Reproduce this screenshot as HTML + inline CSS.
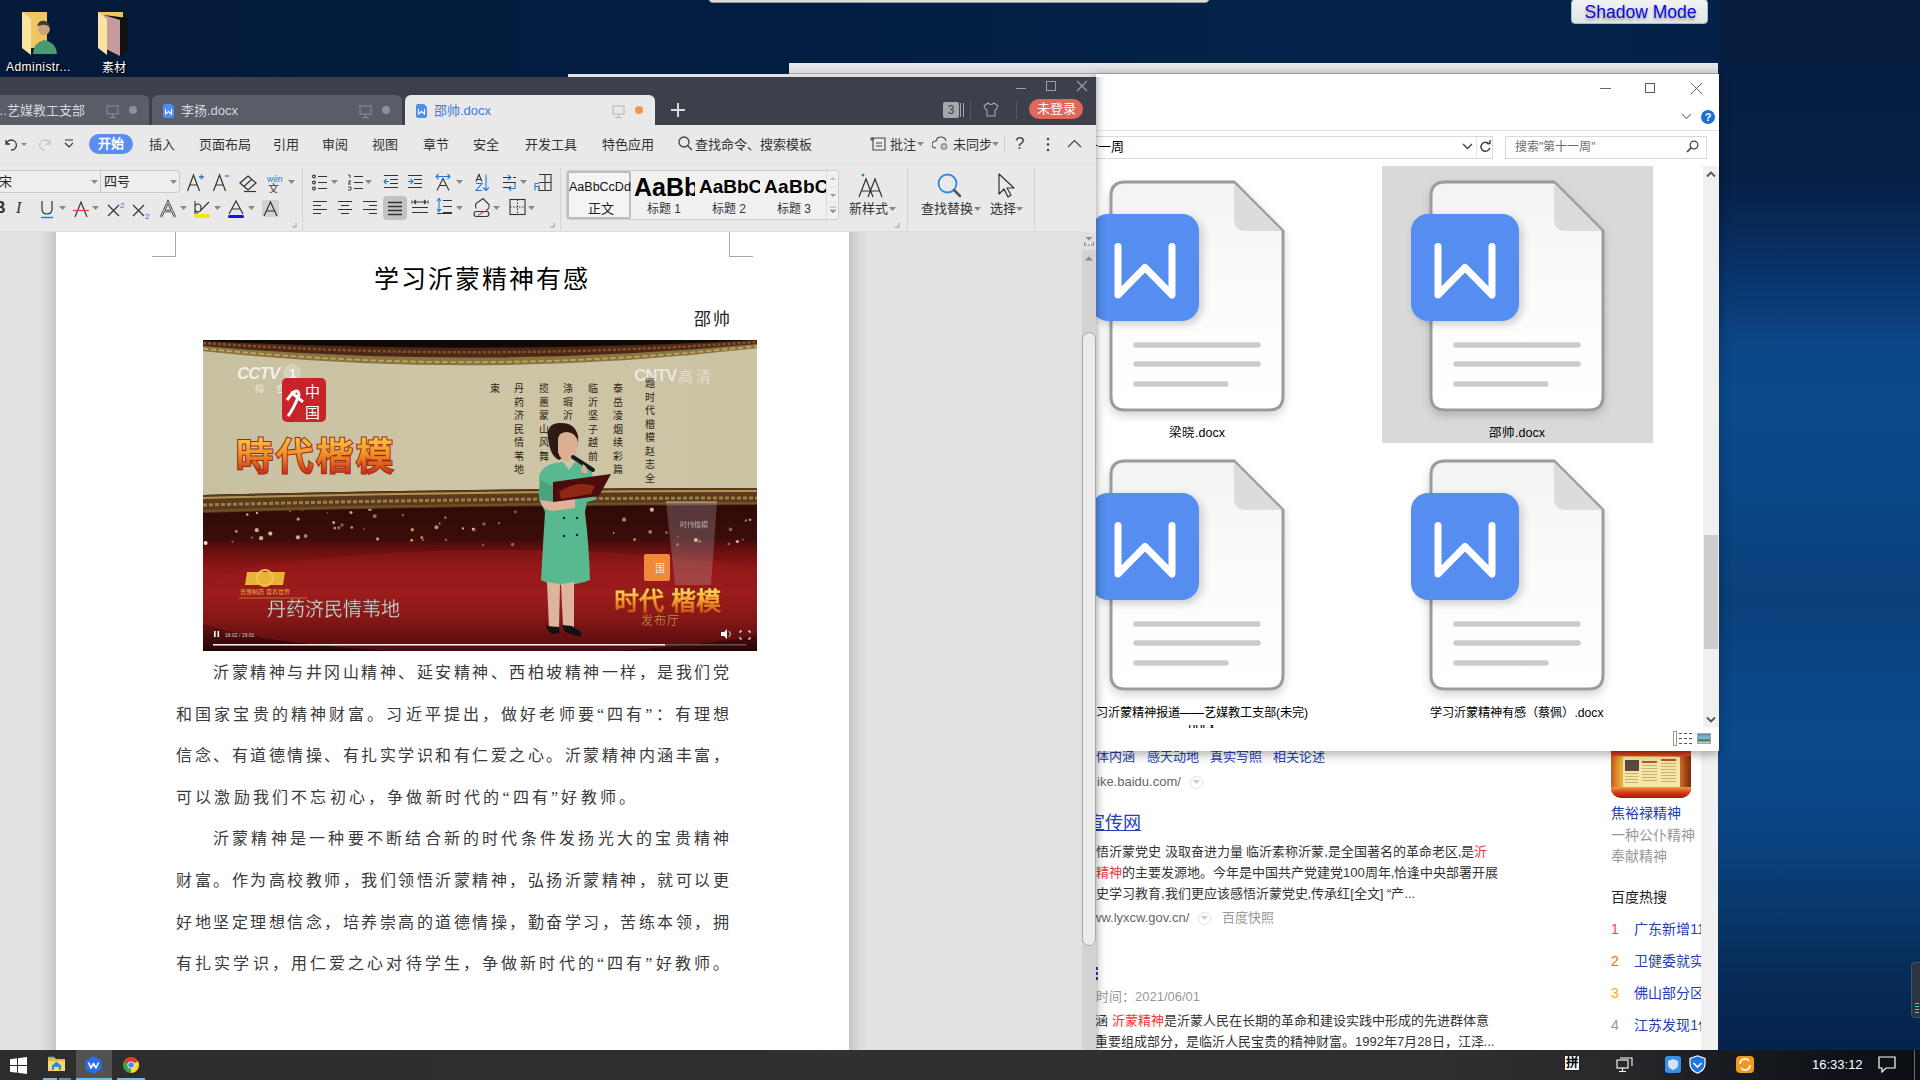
<!DOCTYPE html>
<html lang="zh-CN"><head><meta charset="utf-8">
<style>
*{margin:0;padding:0;box-sizing:border-box}
html,body{width:1920px;height:1080px;overflow:hidden}
body{position:relative;font-family:"Liberation Sans",sans-serif;background:#03173a}
.a{position:absolute}
.nw{white-space:nowrap}
#desk{left:0;top:0;width:1920px;height:1080px;background:
 linear-gradient(180deg,#061c3e 0px,#072046 180px,#09326a 270px,#0b4584 340px,#0b4a8c 400px,#0a4482 520px,#0a3f7b 600px,#0b4a8c 740px,#0a4280 840px,#083668 920px,#062a56 980px,#05234c 1050px)}
#deskTop{left:0;top:0;width:1720px;height:80px;background:linear-gradient(90deg,#041a3a 0%,#031c40 40%,#042045 60%,#05234b 80%,#05214a 100%)}
.dlabel{color:#fff;font-size:12px;text-shadow:0 0 2px #000,1px 1px 2px #000}
/* explorer */
#exp{left:1096px;top:74px;width:623px;height:677px;background:#fff;box-shadow:0 3px 10px rgba(0,0,0,.35);overflow:hidden}
#brw{left:1096px;top:74px;width:622px;height:976px;background:#fff;overflow:hidden}
#task{left:0;top:1050px;width:1920px;height:30px;background:linear-gradient(90deg,#2d2d2d 0%,#303030 45%,#2f2f2f 75%,#28292b 84%,#181b20 90%,#0e1218 96%,#0d1117 100%)}
.lbl{font-size:12.5px;color:#000;text-align:center}
</style></head><body>
<div id="desk" class="a"></div>
<div id="deskTop" class="a"></div>

<!-- desktop icons -->
<div class="a" style="left:22px;top:12px;width:26px;height:40px">
 <svg width="40" height="44" viewBox="0 0 40 44" style="position:absolute;left:0;top:0">
  <path d="M0 0H25V36H0Z" fill="#f0c75e"/>
  <path d="M0 0L9 7V43L0 36Z" fill="#fbe4a0"/>
  <circle cx="22" cy="17" r="6" fill="#c9a27e"/>
  <path d="M15 14Q17 8 23 9Q29 10 28 17Q26 12 20 13Z" fill="#3b3b3b"/>
  <path d="M11 42Q12 30 22 28Q34 30 35 42Z" fill="#4b9a72"/>
 </svg>
</div>
<div class="a dlabel nw" style="left:6px;top:60px;letter-spacing:0.45px">Administr...</div>
<div class="a" style="left:98px;top:12px;width:32px;height:42px">
 <svg width="32" height="44" viewBox="0 0 32 44">
  <path d="M0 0H25V36H0Z" fill="#f0c75e"/>
  <path d="M6 3L30 6V38L22 44L6 36Z" fill="#111"/>
  <path d="M6 3L22 8V44L6 36Z" fill="#c79a9c"/>
  <path d="M0 0L9 7V43L0 36Z" fill="#fbe4a0"/>
 </svg>
</div>
<div class="a dlabel nw" style="left:102px;top:58px">素材</div>

<!-- top thin bar -->
<div class="a" style="left:708px;top:-4px;width:502px;height:7px;background:#dcdcdc;border-radius:0 0 5px 5px;border:1px solid #9a9a9a"></div>
<!-- shadow mode -->
<div class="a nw" style="left:1571px;top:-1px;width:137px;height:25px;background:linear-gradient(#f2f2f2,#e4e4e4);border:1px solid #8fc8c0;border-radius:4px;color:#0a0ae0;font-size:17.5px;text-align:center;line-height:24px;padding-left:2px;text-shadow:0 2px 3px rgba(0,0,0,0.35)">Shadow Mode</div>

<!-- background window strips -->
<div class="a" style="left:568px;top:74px;width:600px;height:4px;background:#e2e0e0"></div>
<div class="a" style="left:789px;top:63px;width:929px;height:11px;background:linear-gradient(#e9ebed,#d5d8db);border-bottom:1px solid #a8a8a8"></div>

<!-- BROWSER -->
<div id="brw" class="a"></div>
<div class="a" style="left:1701px;top:74px;width:17px;height:976px;background:#f1f1f1"></div>
<div class="a nw" style="left:1096px;top:748px;font-size:13px;color:#2440b3;line-height:17px">体内涵<span style="margin-left:12px">感天动地</span><span style="margin-left:11px">真实写照</span><span style="margin-left:11px">相关论述</span></div>
<div class="a nw" style="left:1097px;top:774px;font-size:13px;color:#666;line-height:16px">ike.baidu.com/</div>
<div class="a" style="left:1190px;top:776px;width:13px;height:13px;border-radius:50%;border:1.5px solid #e3e3e3"></div><svg class="a" style="left:1193px;top:780px" width="7" height="5"><path d="M0 0H7L3.5 4Z" fill="#ccc"/></svg>
<div class="a nw" style="left:1087px;top:812px;font-size:18px;color:#2440b3;line-height:22px;text-decoration:underline">宣传网</div>
<div class="a nw" style="left:1096px;top:841px;font-size:13px;color:#333;line-height:21px">悟沂蒙党史 汲取奋进力量 临沂素称沂蒙,是全国著名的革命老区,是<span style="color:#e33">沂</span><br><span style="color:#e33">精神</span>的主要发源地。今年是中国共产党建党100周年,恰逢中央部署开展<br>史学习教育,我们更应该感悟沂蒙党史,传承红[全文] “产...</div>
<div class="a nw" style="left:1092px;top:910px;font-size:13px;color:#666;line-height:16px">ww.lyxcw.gov.cn/</div>
<div class="a" style="left:1198px;top:912px;width:13px;height:13px;border-radius:50%;border:1.5px solid #e3e3e3"></div><svg class="a" style="left:1201px;top:916px" width="7" height="5"><path d="M0 0H7L3.5 4Z" fill="#ccc"/></svg>
<div class="a nw" style="left:1222px;top:910px;font-size:13px;color:#999;line-height:16px">百度快照</div>
<div class="a" style="left:1095px;top:967px;width:3px;height:13px;border-left:3px dotted #2440b3"></div>
<div class="a nw" style="left:1096px;top:989px;font-size:13px;color:#999;line-height:16px">时间：2021/06/01</div>
<div class="a nw" style="left:1095px;top:1010px;font-size:13px;color:#333;line-height:21px">涵 <span style="color:#e33">沂蒙精神</span>是沂蒙人民在长期的革命和建设实践中形成的先进群体意<br>重要组成部分，是临沂人民宝贵的精神财富。1992年7月28日，江泽...</div>
<div class="a" style="left:1611px;top:740px;width:80px;height:58px;border-radius:0 0 10px 10px;overflow:hidden;background:linear-gradient(90deg,#c85a18 0%,#e8a838 12%,#f0c050 20%,#e0a040 80%,#b04a18 92%,#7a2a10 100%)">
 <div class="a" style="left:0;top:0;width:80px;height:16px;background:linear-gradient(#6a0c08,#c82a18 70%,#e05020)"></div>
 <div class="a" style="left:12px;top:17px;width:57px;height:32px;background:#f3e6a8"></div>
 <div class="a" style="left:14px;top:20px;width:14px;height:11px;background:#5a4a42"></div>
 <div class="a" style="left:14px;top:33px;width:13px;height:10px;background:repeating-linear-gradient(#c8b070 0 1px,transparent 1px 3px)"></div>
 <div class="a" style="left:31px;top:21px;width:15px;height:2px;background:#d04a30"></div>
 <div class="a" style="left:31px;top:25px;width:15px;height:18px;background:repeating-linear-gradient(#c8b070 0 1px,transparent 1px 3px)"></div>
 <div class="a" style="left:50px;top:19px;width:15px;height:2px;background:#d04a30"></div>
 <div class="a" style="left:50px;top:23px;width:15px;height:20px;background:repeating-linear-gradient(#c8b070 0 1px,transparent 1px 3px)"></div>
 <div class="a" style="left:0;top:47px;width:80px;height:11px;background:linear-gradient(#e8a040,#d83a1a 50%,#a01a10)"></div>
</div>
<div class="a nw" style="left:1611px;top:804px;font-size:14px;color:#2440b3;line-height:18px">焦裕禄精神</div>
<div class="a nw" style="left:1611px;top:825px;font-size:14px;color:#999;line-height:21px">一种公仆精神<br>奉献精神</div>
<div class="a nw" style="left:1611px;top:888px;font-size:14px;color:#222;line-height:18px">百度热搜</div>
<div class="a nw" style="left:1611px;top:913px;font-size:14px;line-height:32px;color:#2440b3;width:90px;overflow:hidden">
<span style="color:#f54545">1</span>&nbsp;&nbsp;&nbsp;&nbsp;广东新增11<br><span style="color:#ff6600">2</span>&nbsp;&nbsp;&nbsp;&nbsp;卫健委就实<br><span style="color:#faa90e">3</span>&nbsp;&nbsp;&nbsp;&nbsp;佛山部分区<br><span style="color:#9195a3">4</span>&nbsp;&nbsp;&nbsp;&nbsp;江苏发现1亿</div>
<div class="a" style="left:1911px;top:962px;width:12px;height:56px;background:#2b3440;border:1px solid #4a5560;border-radius:4px">
 <div class="a" style="left:3px;top:40px;width:4px;height:10px;background:repeating-linear-gradient(#3ad29f 0 1px,transparent 1px 3px)"></div>
</div>


<!-- EXPLORER -->
<div id="exp" class="a"></div>
<svg width="0" height="0" style="position:absolute">
 <defs>
  <linearGradient id="dg" x1="0" y1="0" x2="0" y2="1"><stop offset="0" stop-color="#f3f3f3"/><stop offset="0.45" stop-color="#fbfbfb"/><stop offset="1" stop-color="#ffffff"/></linearGradient>
  <filter id="dsh" x="-20%" y="-20%" width="140%" height="140%"><feGaussianBlur in="SourceAlpha" stdDeviation="5"/><feOffset dy="4"/><feComponentTransfer><feFuncA type="linear" slope="0.18"/></feComponentTransfer><feMerge><feMergeNode/><feMergeNode in="SourceGraphic"/></feMerge></filter>
  <filter id="wsh" x="-30%" y="-30%" width="160%" height="160%"><feGaussianBlur in="SourceAlpha" stdDeviation="4"/><feOffset dx="3" dy="3"/><feComponentTransfer><feFuncA type="linear" slope="0.2"/></feComponentTransfer><feMerge><feMergeNode/><feMergeNode in="SourceGraphic"/></feMerge></filter>
  <g id="docic">
   <path filter="url(#dsh)" d="M15 1H124L173 50V215Q173 229 159 229H15Q1 229 1 215V15Q1 1 15 1Z" fill="url(#dg)" stroke="#9b9b9b" stroke-width="3"/>
   <path d="M124 2V38Q124 50 136 50H172Z" fill="#dcdcdc"/>
   <path d="M26 164H148M26 183H148M26 203H116" stroke="#cbcbcb" stroke-width="5.5" stroke-linecap="round"/>
   <rect filter="url(#wsh)" x="-19" y="33" width="108" height="107" rx="17" fill="#558ef0"/>
   <path d="M8 65.5V114L35 86.5L62 114V65.5" fill="none" stroke="#fff" stroke-width="7" stroke-linecap="round" stroke-linejoin="round"/>
  </g>
 </defs>
</svg>
<div class="a" style="left:1382px;top:166px;width:271px;height:277px;background:#d9d9d9"></div>
<svg class="a" style="left:1085px;top:173px;overflow:visible" width="220" height="250" viewBox="-25 -8 220 250"><use href="#docic"/></svg><svg class="a" style="left:1405px;top:173px;overflow:visible" width="220" height="250" viewBox="-25 -8 220 250"><use href="#docic"/></svg><svg class="a" style="left:1085px;top:452px;overflow:visible" width="220" height="250" viewBox="-25 -8 220 250"><use href="#docic"/></svg><svg class="a" style="left:1405px;top:452px;overflow:visible" width="220" height="250" viewBox="-25 -8 220 250"><use href="#docic"/></svg>
<div class="a nw lbl" style="left:1097px;top:422px;width:200px">梁晓.docx</div>
<div class="a nw lbl" style="left:1417px;top:422px;width:200px">邵帅.docx</div>
<div class="a nw lbl" style="right:612px;top:703px;font-size:12.2px">学习沂蒙精神报道——艺媒教工支部(未完)</div>
<div class="a nw lbl" style="left:1170px;top:725px;width:60px;height:3px;overflow:hidden"><div style="margin-top:-7px;line-height:16px">.docx</div></div>
<div class="a nw lbl" style="left:1367px;top:703px;width:300px;font-size:12.2px">学习沂蒙精神有感（蔡佩）.docx</div>
<!-- title buttons -->
<div class="a" style="left:1600px;top:88px;width:11px;height:1px;background:#666"></div>
<div class="a" style="left:1645px;top:83px;width:10px;height:10px;border:1px solid #555"></div>
<svg class="a" style="left:1690px;top:82px" width="13" height="13"><path d="M1 1L12 12M12 1L1 12" stroke="#555" stroke-width="0.9"/></svg>
<svg class="a" style="left:1681px;top:113px" width="11" height="7"><path d="M1 1L5.5 5.5L10 1" fill="none" stroke="#888" stroke-width="1.2"/></svg>
<div class="a" style="left:1701px;top:110px;width:14px;height:14px;border-radius:50%;background:#1b6fcf;color:#fff;font-size:11px;font-weight:bold;text-align:center;line-height:14px">?</div>
<div class="a" style="left:1096px;top:130px;width:623px;height:1px;background:#e3e3e3"></div>
<!-- address bar -->
<div class="a" style="left:1080px;top:136px;width:413px;height:23px;border:1px solid #d9d9d9;border-left:none"></div>
<div class="a nw" style="left:1072px;top:138px;font-size:13px;color:#000;line-height:17px">第十一周</div>
<svg class="a" style="left:1462px;top:143px" width="11" height="7"><path d="M1 1L5.5 5.5L10 1" fill="none" stroke="#444" stroke-width="1.4"/></svg>
<div class="a" style="left:1476px;top:137px;width:1px;height:21px;background:#e3e3e3"></div>
<svg class="a" style="left:1479px;top:140px" width="13" height="13"><path d="M10 4A4.5 4.5 0 1 0 10.8 8" fill="none" stroke="#444" stroke-width="1.5"/><path d="M7.5 3.5H11V0" fill="none" stroke="#444" stroke-width="1.5"/></svg>
<div class="a" style="left:1505px;top:136px;width:202px;height:23px;border:1px solid #d9d9d9"></div>
<div class="a nw" style="left:1515px;top:139px;font-size:12px;color:#6d6d6d;line-height:16px">搜索"第十一周"</div>
<svg class="a" style="left:1686px;top:140px" width="13" height="13"><circle cx="8" cy="5" r="3.8" fill="none" stroke="#444" stroke-width="1.3"/><path d="M5.3 7.7L1 12" stroke="#444" stroke-width="1.7"/></svg>
<!-- scrollbar -->
<div class="a" style="left:1703px;top:166px;width:16px;height:561px;background:#f0f0f0"></div>
<svg class="a" style="left:1706px;top:171px" width="10" height="7"><path d="M1 5.5L5 1.5L9 5.5" fill="none" stroke="#555" stroke-width="1.8"/></svg>
<svg class="a" style="left:1706px;top:716px" width="10" height="7"><path d="M1 1.5L5 5.5L9 1.5" fill="none" stroke="#555" stroke-width="1.8"/></svg>
<div class="a" style="left:1704px;top:535px;width:14px;height:114px;background:#cdcdcd"></div>
<!-- status icons -->
<svg class="a" style="left:1673px;top:731px" width="20" height="15"><rect x="0.5" y="0.5" width="3" height="14" fill="#fff" stroke="#999"/><path d="M6 2.5H9M11 2.5H14M16 2.5H19M6 7.5H9M11 7.5H14M16 7.5H19M6 12.5H9M11 12.5H14M16 12.5H19" stroke="#555" stroke-width="1"/></svg>
<div class="a" style="left:1697px;top:733px;width:14px;height:11px;border:1px solid #9ea4aa;background:linear-gradient(#5a8fc0 0%,#8ab6d8 45%,#3b7a4a 70%,#d8e4ee 100%)"></div>


<!-- WPS -->
<div id="wps" class="a" style="left:0;top:77px;width:1096px;height:973px;background:#e3e3e3;overflow:hidden"></div>
<!-- title bar -->
<div class="a" style="left:0;top:77px;width:1096px;height:48px;background:#3d404b"></div>
<div class="a" style="left:1016px;top:88px;width:10px;height:1px;background:#9a9da4"></div>
<div class="a" style="left:1046px;top:81px;width:10px;height:10px;border:1px solid #9a9da4"></div>
<svg class="a" style="left:1076px;top:80px" width="12" height="12"><path d="M1 1L11 11M11 1L1 11" stroke="#9a9da4" stroke-width="1.2"/></svg>
<!-- tabs -->
<div class="a" style="left:-10px;top:95px;width:159px;height:30px;background:#5b5e69;border-radius:0 6px 0 0"></div>
<div class="a nw" style="left:-4px;top:102px;font-size:13px;color:#d5d6da;line-height:18px">...艺媒教工支部</div>
<div class="a" style="left:152px;top:95px;width:250px;height:30px;background:#5b5e69;border-radius:6px 6px 0 0"></div>
<div class="a" style="left:405px;top:95px;width:250px;height:30px;background:#e9e9e9;border-radius:6px 6px 0 0"></div>
<svg class="a" style="left:163px;top:104px" width="11" height="14"><path d="M0 2Q0 0 2 0H8L11 3V12Q11 14 9 14H2Q0 14 0 12Z" fill="#4d8ef0"/><path d="M2.5 5V10L5.5 7.5L8.5 10V5" fill="none" stroke="#fff" stroke-width="1.1"/></svg>
<svg class="a" style="left:416px;top:104px" width="11" height="14"><path d="M0 2Q0 0 2 0H8L11 3V12Q11 14 9 14H2Q0 14 0 12Z" fill="#4d8ef0"/><path d="M2.5 5V10L5.5 7.5L8.5 10V5" fill="none" stroke="#fff" stroke-width="1.1"/></svg>
<div class="a nw" style="left:181px;top:102px;font-size:13px;color:#d5d6da;line-height:18px">李扬.docx</div>
<div class="a nw" style="left:434px;top:102px;font-size:13px;color:#3d7ae0;line-height:18px">邵帅.docx</div>
<svg class="a" style="left:106px;top:105px" width="13" height="13"><rect x="1" y="1" width="11" height="8" fill="none" stroke="#8d9099" stroke-width="1"/><path d="M6.5 9V12M3.5 12.5H9.5" stroke="#8d9099" stroke-width="1"/></svg><div class="a" style="left:129px;top:106px;width:8px;height:8px;border-radius:50%;background:#8d9099"></div><svg class="a" style="left:359px;top:105px" width="13" height="13"><rect x="1" y="1" width="11" height="8" fill="none" stroke="#8d9099" stroke-width="1"/><path d="M6.5 9V12M3.5 12.5H9.5" stroke="#8d9099" stroke-width="1"/></svg><div class="a" style="left:382px;top:106px;width:8px;height:8px;border-radius:50%;background:#8d9099"></div><svg class="a" style="left:612px;top:105px" width="13" height="13"><rect x="1" y="1" width="11" height="8" fill="none" stroke="#b4b4b4" stroke-width="1"/><path d="M6.5 9V12M3.5 12.5H9.5" stroke="#b4b4b4" stroke-width="1"/></svg><div class="a" style="left:635px;top:106px;width:8px;height:8px;border-radius:50%;background:#ee9a4d"></div>
<svg class="a" style="left:671px;top:103px" width="14" height="14"><path d="M7 0V14M0 7H14" stroke="#d8d9dc" stroke-width="2"/></svg>
<div class="a" style="left:943px;top:102px;width:16px;height:16px;background:#a6a7ab;border-radius:2px;color:#3d404b;font-size:12px;text-align:center;line-height:16px">3</div>
<div class="a" style="left:960px;top:103px;width:4px;height:14px;border-left:1px solid #a6a7ab;border-right:1px solid #a6a7ab"></div>
<div class="a" style="left:970px;top:101px;width:1px;height:18px;background:#565964"></div>
<svg class="a" style="left:983px;top:102px" width="16" height="15"><path d="M5 1L1 4L3 8H4V14H12V8H13L15 4L11 1Q8 4 5 1Z" fill="none" stroke="#a6a7ab" stroke-width="1.1"/></svg>
<div class="a" style="left:1016px;top:101px;width:1px;height:18px;background:#565964"></div>
<div class="a nw" style="left:1029px;top:99px;width:54px;height:20px;border-radius:10px;background:#e0685b;color:#fff;font-size:13px;text-align:center;line-height:20px">未登录</div>
<!-- toolbar -->
<div class="a" style="left:0;top:125px;width:1096px;height:107px;background:#e9e9e9"></div>
<div class="a" style="left:0;top:163px;width:1096px;height:1px;background:#dcdcdc"></div>
<div class="a" style="left:0;top:231px;width:1082px;height:1px;background:#dadada"></div>
<!-- undo etc -->
<svg class="a" style="left:3px;top:137px" width="70" height="14">
 <path d="M3 3V7H7" fill="none" stroke="#333" stroke-width="1.3"/><path d="M3.5 7A5 5 0 1 1 8 13" fill="none" stroke="#333" stroke-width="1.3"/>
 <path d="M18 6L21 9L24 6Z" fill="#888"/>
 <path d="M47 3V7H43" fill="none" stroke="#c4c4c4" stroke-width="1.3"/><path d="M46.5 7A5 5 0 1 0 42 13" fill="none" stroke="#c4c4c4" stroke-width="1.3"/>
 <path d="M62 3H70M62 6L66 10L70 6" fill="none" stroke="#333" stroke-width="1.2"/>
</svg>
<div class="a nw" style="left:89px;top:134px;width:44px;height:20px;border-radius:10px;background:#5b8def;color:#fff;font-size:13px;text-align:center;line-height:20px;font-weight:bold">开始</div>
<div class="a nw" style="top:136px;left:149px;font-size:13px;color:#333;line-height:18px">插入</div>
<div class="a nw" style="top:136px;left:199px;font-size:13px;color:#333;line-height:18px">页面布局</div>
<div class="a nw" style="top:136px;left:273px;font-size:13px;color:#333;line-height:18px">引用</div>
<div class="a nw" style="top:136px;left:322px;font-size:13px;color:#333;line-height:18px">审阅</div>
<div class="a nw" style="top:136px;left:372px;font-size:13px;color:#333;line-height:18px">视图</div>
<div class="a nw" style="top:136px;left:423px;font-size:13px;color:#333;line-height:18px">章节</div>
<div class="a nw" style="top:136px;left:473px;font-size:13px;color:#333;line-height:18px">安全</div>
<div class="a nw" style="top:136px;left:525px;font-size:13px;color:#333;line-height:18px">开发工具</div>
<div class="a nw" style="top:136px;left:602px;font-size:13px;color:#333;line-height:18px">特色应用</div>
<svg class="a" style="left:678px;top:136px" width="15" height="15"><circle cx="6" cy="6" r="5" fill="none" stroke="#444" stroke-width="1.3"/><path d="M9.5 9.5L14 14" stroke="#444" stroke-width="1.5"/></svg>
<div class="a nw" style="top:136px;left:695px;font-size:13px;color:#333;line-height:18px">查找命令、搜索模板</div>
<svg class="a" style="left:870px;top:136px" width="16" height="15"><path d="M3 2H15V14H3Z" fill="none" stroke="#444" stroke-width="1.1"/><path d="M0 3H4M2 1V5M6 7H12M6 10H12" stroke="#444" stroke-width="1.1"/></svg>
<div class="a nw" style="top:136px;left:890px;font-size:13px;color:#333;line-height:18px">批注</div>
<svg class="a" style="left:917px;top:142px" width="7" height="4"><path d="M0 0H7L3.5 4Z" fill="#888"/></svg>
<svg class="a" style="left:932px;top:136px" width="17" height="15"><path d="M4 12Q0 12 0 8.5Q0 5 4 5Q5 1 9 1Q13 1 14 5" fill="none" stroke="#444" stroke-width="1.1"/><circle cx="12" cy="10.5" r="3.5" fill="#999"/><path d="M10.5 9L13.5 12M13.5 9L10.5 12" stroke="#fff" stroke-width="0.9"/></svg>
<div class="a nw" style="top:136px;left:953px;font-size:13px;color:#333;line-height:18px">未同步</div>
<svg class="a" style="left:992px;top:142px" width="7" height="4"><path d="M0 0H7L3.5 4Z" fill="#888"/></svg>
<div class="a" style="left:1004px;top:136px;width:1px;height:16px;background:#cfcfcf"></div>
<div class="a nw" style="top:133px;left:1015px;font-size:17px;color:#444;line-height:22px">?</div>
<svg class="a" style="left:1046px;top:137px" width="4" height="15"><circle cx="2" cy="2" r="1.3" fill="#444"/><circle cx="2" cy="7.5" r="1.3" fill="#444"/><circle cx="2" cy="13" r="1.3" fill="#444"/></svg>
<svg class="a" style="left:1067px;top:139px" width="15" height="9"><path d="M1 8L7.5 1.5L14 8" fill="none" stroke="#444" stroke-width="1.2"/></svg>


<!-- font boxes -->
<div class="a" style="left:-10px;top:170px;width:190px;height:23px;border:1px solid #c9c9c9;border-radius:4px;background:#eeeeee"></div>
<div class="a" style="left:100px;top:171px;width:1px;height:21px;background:#c9c9c9"></div>
<div class="a nw" style="left:-1px;top:173px;font-size:13px;color:#222;line-height:17px">宋</div>
<div class="a nw" style="left:104px;top:173px;font-size:13px;color:#222;line-height:17px">四号</div>
<svg class="a" style="left:91px;top:180px" width="7" height="4"><path d="M0 0H7L3.5 4Z" fill="#888"/></svg><svg class="a" style="left:170px;top:180px" width="7" height="4"><path d="M0 0H7L3.5 4Z" fill="#888"/></svg>
<svg class="a" style="left:186px;top:173px" width="120" height="20">
 <path d="M1.5 18L7.5 2L13.5 18M3.7 12H11.3" fill="none" stroke="#333" stroke-width="1.2"/><path d="M13 4H18M15.5 1.5V6.5" stroke="#1e7ad6" stroke-width="1.3"/>
 <path d="M27.5 18L33.5 2L39.5 18M29.7 12H37.3" fill="none" stroke="#333" stroke-width="1.2"/><path d="M39 3H43" stroke="#1e7ad6" stroke-width="1.3"/>
 <path d="M62 3L70 10L62 17L54 10Z" fill="none" stroke="#333" stroke-width="1.3"/><path d="M58 13.5L65.5 6.5" stroke="#333" stroke-width="1.1"/><path d="M58 18.5H70" stroke="#333" stroke-width="1.2"/>
 <text x="81" y="9" font-size="8.5" fill="#1e7ad6" font-family="Liberation Sans">wén</text>
 <text x="82" y="19.5" font-size="11" fill="#333">文</text>
</svg>
<svg class="a" style="left:288px;top:180px" width="7" height="4"><path d="M0 0H7L3.5 4Z" fill="#888"/></svg>
<div class="a" style="left:302px;top:168px;width:1px;height:62px;background:#d3d3d3"></div>
<!-- row2 font -->
<div class="a nw" style="left:-6px;top:199px;font-size:16px;font-weight:bold;color:#333;line-height:18px">B</div>
<div class="a nw" style="left:16px;top:199px;font-size:16px;font-style:italic;color:#333;line-height:18px;font-family:'Liberation Serif'">I</div>
<svg class="a" style="left:38px;top:199px" width="250" height="20">
 <path d="M4 2V10Q4 15 9 15Q14 15 14 10V2" fill="none" stroke="#333" stroke-width="1.2"/><path d="M3 18.5H15" stroke="#1e7ad6" stroke-width="1.4"/>
 <path d="M37 18L43 3L49 18" fill="none" stroke="#333" stroke-width="1.2"/><path d="M35 11.5H51" stroke="#e04a3a" stroke-width="1.3"/>
 <path d="M70 6L81 17M81 6L70 17" stroke="#333" stroke-width="1.2"/><text x="82" y="9" font-size="8" fill="#1e7ad6" font-family="Liberation Sans">2</text>
 <path d="M95 6L106 17M106 6L95 17" stroke="#333" stroke-width="1.2"/><text x="107" y="20" font-size="8" fill="#1e7ad6" font-family="Liberation Sans">2</text>
 <path d="M123 18L130 3L137 18M125.5 12H134.5" fill="none" stroke="#333" stroke-width="2.4"/><path d="M123 18L130 3L137 18M125.5 12H134.5" fill="none" stroke="#e9e9e9" stroke-width="0.9"/>
 <path d="M157 13V2M157 8Q157 5 160 5Q163 5 163 9Q163 13 160 13Q157 13 157 10M162 12L171 3" fill="none" stroke="#333" stroke-width="1.1"/><path d="M156 14H160" stroke="#333"/><rect x="156" y="15" width="16" height="4" rx="2" fill="#f3e600"/>
 <path d="M191 15L198 2L205 15M193.5 10H202.5" fill="none" stroke="#333" stroke-width="1.2"/><rect x="190" y="16" width="16" height="3" rx="1.5" fill="#1515d8"/>
 <rect x="224" y="1" width="17" height="17" rx="2" fill="#d2d2d2"/><path d="M226 17L232.5 3L239 17M228.5 12H236.5" fill="none" stroke="#333" stroke-width="1.2"/>
</svg>
<svg class="a" style="left:59px;top:206px" width="7" height="4"><path d="M0 0H7L3.5 4Z" fill="#888"/></svg><svg class="a" style="left:92px;top:206px" width="7" height="4"><path d="M0 0H7L3.5 4Z" fill="#888"/></svg><svg class="a" style="left:180px;top:206px" width="7" height="4"><path d="M0 0H7L3.5 4Z" fill="#888"/></svg><svg class="a" style="left:214px;top:206px" width="7" height="4"><path d="M0 0H7L3.5 4Z" fill="#888"/></svg><svg class="a" style="left:248px;top:206px" width="7" height="4"><path d="M0 0H7L3.5 4Z" fill="#888"/></svg>
<svg class="a" style="left:292px;top:223px" width="5" height="5"><path d="M4 0V4H0" fill="none" stroke="#999" stroke-width="1"/></svg>
<!-- paragraph group -->
<svg class="a" style="left:310px;top:172px" width="250" height="50">
 <g fill="none" stroke="#333" stroke-width="1.1"><g transform="translate(0,1.5)">
  <circle cx="4" cy="3" r="1.4"/><circle cx="4" cy="9" r="1.4"/><circle cx="4" cy="15" r="1.4"/><path d="M8 3H17M8 9H17M8 15H17"/>
  <path d="M44 3H53M44 9H53M44 15H53"/><path d="M38 1.5H40V4.5M38 7.5H41L38 10.5H41M38 13.5H41V16.5H38" stroke-width="0.9"/>
  <path d="M74 2H88M80 6H88M80 10H88M74 14H88"/><path d="M79 8H74M76.5 5.5L74 8L76.5 10.5" stroke="#1e7ad6"/>
  <path d="M98 2H112M104 6H112M104 10H112M98 14H112"/><path d="M98 8H103M100.5 5.5L103 8L100.5 10.5" stroke="#1e7ad6"/>
  <path d="M127 17L133 5L139 17M129.5 12H136.5"/><path d="M126 3H140M128.5 0.5L126 3L128.5 5.5M137.5 0.5L140 3L137.5 5.5" stroke="#1e7ad6"/>
  <path d="M166 8L169 1L172 8M167 6H171"/><path d="M166 10H172L166 17H172" stroke="#1e7ad6"/><path d="M176 1V17M173 14L176 17L179 14" stroke="#1e7ad6"/>
  <path d="M193 4H200M203 4H206M193 9H206M193 14H201"/><path d="M198 1.5L201 4L198 6.5M205 9V15H199M201 12.5L199 15L201 17.5" stroke="#1e7ad6"/>
  <path d="M229 1H241V17H229V12M235 1V17M229 9H241"/><path d="M225 10H229M225 10V17M225 13H228" stroke="#1e7ad6"/>
  </g><g transform="translate(0,0.5)" stroke-width="1"><path d="M3 29H17M3 33H11M3 37H17M3 41H11"/>
  <path d="M28 29H42M31 33H39M28 37H42M31 41H39"/>
  <path d="M53 29H67M59 33H67M53 37H67M59 41H67"/>
 </g></g>
</svg>
<div class="a" style="left:383px;top:196px;width:24px;height:24px;border-radius:4px;background:#c3c3c3"></div>
<svg class="a" style="left:310px;top:196px" width="250" height="30">
 <g fill="none" stroke="#333" stroke-width="1.1" transform="translate(0,0.5)">
  <path d="M78 6H92M78 10H92M78 14H92M78 18H92" stroke-width="1.6"/>
  <path d="M102 7V4M118 7V4M104 5.5H116M106 3.5L104 5.5L106 7.5M114 3.5L116 5.5L114 7.5M102 11H118M102 16H118"/>
  <path d="M133 4H142M133 10H142M133 16H142M127 17H142"/><path d="M129 2V15M127 4.5L129 2L131 4.5M127 12.5L129 15L131 12.5" stroke="#1e7ad6"/>
  <path d="M166 12Q164 7 169 5L173 2L179 8Q180 12 176 14"/><rect x="164" y="15" width="15" height="5" rx="2.5"/><path d="M168 19L174 15" stroke="#e04a3a"/>
  <rect x="200" y="3" width="15" height="15"/><path d="M207.5 3V18M200 10.5H215" stroke-dasharray="1.5 1.5"/>
 </g>
</svg>
<svg class="a" style="left:331px;top:180px" width="7" height="4"><path d="M0 0H7L3.5 4Z" fill="#888"/></svg><svg class="a" style="left:365px;top:180px" width="7" height="4"><path d="M0 0H7L3.5 4Z" fill="#888"/></svg><svg class="a" style="left:456px;top:180px" width="7" height="4"><path d="M0 0H7L3.5 4Z" fill="#888"/></svg><svg class="a" style="left:520px;top:180px" width="7" height="4"><path d="M0 0H7L3.5 4Z" fill="#888"/></svg>
<svg class="a" style="left:456px;top:206px" width="7" height="4"><path d="M0 0H7L3.5 4Z" fill="#888"/></svg><svg class="a" style="left:493px;top:206px" width="7" height="4"><path d="M0 0H7L3.5 4Z" fill="#888"/></svg><svg class="a" style="left:528px;top:206px" width="7" height="4"><path d="M0 0H7L3.5 4Z" fill="#888"/></svg>
<svg class="a" style="left:550px;top:223px" width="5" height="5"><path d="M4 0V4H0" fill="none" stroke="#999" stroke-width="1"/></svg>
<div class="a" style="left:560px;top:168px;width:1px;height:62px;background:#d3d3d3"></div>
<!-- styles gallery -->
<div class="a" style="left:566px;top:170px;width:273px;height:50px;border:1px solid #cfcfcf;border-radius:3px;background:#f1f1f1"></div>
<div class="a" style="left:567px;top:171px;width:64px;height:48px;border:2px solid #bdbdbd;border-radius:2px;background:#f4f4f4"></div>
<div class="a nw" style="left:569px;top:179px;width:62px;overflow:hidden;font-size:12.5px;color:#111;line-height:16px">AaBbCcDd</div>
<div class="a nw" style="left:634px;top:172px;width:61px;overflow:hidden;font-size:25px;font-weight:bold;color:#000;line-height:30px">AaBbC</div>
<div class="a nw" style="left:699px;top:176px;width:61px;overflow:hidden;font-size:19px;font-weight:bold;color:#000;line-height:22px">AaBbC</div>
<div class="a nw" style="left:764px;top:176px;width:62px;overflow:hidden;font-size:19px;font-weight:bold;color:#000;line-height:22px;letter-spacing:0.3px">AaBbC</div>
<div class="a nw" style="left:588px;top:201px;font-size:13px;color:#222;line-height:16px">正文</div>
<div class="a nw" style="left:647px;top:201px;font-size:12px;color:#333;line-height:16px">标题 1</div>
<div class="a nw" style="left:712px;top:201px;font-size:12px;color:#333;line-height:16px">标题 2</div>
<div class="a nw" style="left:777px;top:201px;font-size:12px;color:#333;line-height:16px">标题 3</div>
<div class="a" style="left:826px;top:171px;width:1px;height:48px;background:#dadada"></div>
<svg class="a" style="left:829px;top:175px" width="8" height="42"><path d="M1 5L4 2L7 5Z" fill="#bbb"/><path d="M1 19L4 22L7 19Z" fill="#999"/><path d="M1 32H7M1 35L4 38L7 35Z" fill="#999" stroke="#999" stroke-width="0.8"/><path d="M0 12H8M0 27H8" stroke="#e0e0e0"/></svg>
<!-- new style -->
<svg class="a" style="left:858px;top:173px" width="28" height="26"><path d="M4 1L6 3M6 1L4 3M5 0.5V3.5M3.5 2H6.5" stroke="#1e7ad6" stroke-width="1"/><path d="M1 24L8 6L15 24M3.5 18H12.5M10 24L17 6L24 24M12.5 18H21.5" fill="none" stroke="#333" stroke-width="1.2"/></svg>
<div class="a nw" style="left:849px;top:201px;font-size:13px;color:#333;line-height:16px">新样式</div>
<svg class="a" style="left:889px;top:207px" width="7" height="4"><path d="M0 0H7L3.5 4Z" fill="#888"/></svg>
<svg class="a" style="left:895px;top:223px" width="5" height="5"><path d="M4 0V4H0" fill="none" stroke="#999" stroke-width="1"/></svg>
<div class="a" style="left:907px;top:168px;width:1px;height:62px;background:#d3d3d3"></div>
<svg class="a" style="left:937px;top:173px" width="26" height="26"><circle cx="10.5" cy="10.5" r="9" fill="none" stroke="#2b8ae6" stroke-width="1.8"/><path d="M17 17L23 23" stroke="#555" stroke-width="2.5" stroke-linecap="round"/></svg>
<div class="a nw" style="left:921px;top:201px;font-size:13px;color:#333;line-height:16px">查找替换</div>
<svg class="a" style="left:974px;top:207px" width="7" height="4"><path d="M0 0H7L3.5 4Z" fill="#888"/></svg>
<svg class="a" style="left:997px;top:173px" width="20" height="26"><path d="M2 1V21L7 16L11 24L14 22L10 15H17Z" fill="none" stroke="#333" stroke-width="1.2" stroke-linejoin="round"/></svg>
<div class="a nw" style="left:990px;top:201px;font-size:13px;color:#333;line-height:16px">选择</div>
<svg class="a" style="left:1016px;top:207px" width="7" height="4"><path d="M0 0H7L3.5 4Z" fill="#888"/></svg>
<div class="a" style="left:1034px;top:168px;width:1px;height:62px;background:#d3d3d3"></div>


<!-- doc area -->
<div class="a" style="left:0;top:232px;width:1082px;height:818px;background:#e1e1e1"></div>
<div class="a" style="left:38px;top:232px;width:18px;height:818px;background:linear-gradient(90deg,rgba(0,0,0,0) 0%,rgba(0,0,0,0.03) 45%,rgba(0,0,0,0.12) 100%)"></div>
<div class="a" style="left:849px;top:232px;width:18px;height:818px;background:linear-gradient(90deg,rgba(0,0,0,0.12) 0%,rgba(0,0,0,0.03) 55%,rgba(0,0,0,0) 100%)"></div>
<div class="a" style="left:56px;top:232px;width:793px;height:818px;background:#fff"></div>
<div class="a" style="left:175px;top:232px;width:1px;height:24px;background:#a8a8a8"></div>
<div class="a" style="left:152px;top:256px;width:24px;height:1px;background:#a8a8a8"></div>
<div class="a" style="left:729px;top:232px;width:1px;height:24px;background:#a8a8a8"></div>
<div class="a" style="left:729px;top:256px;width:24px;height:1px;background:#a8a8a8"></div>
<div class="a nw" style="left:374px;top:266px;font-family:'Liberation Serif',serif;font-size:25px;letter-spacing:2px;color:#000;line-height:28px">学习沂蒙精神有感</div>
<div class="a nw" style="left:694px;top:310px;font-family:'Liberation Serif',serif;font-size:17px;letter-spacing:1.5px;color:#222;line-height:20px">邵帅</div>
<div class="a nw" style="left:213px;top:663px;width:516px;font-family:'Liberation Serif',serif;font-size:16px;color:#3a3a3a;line-height:20px;text-align:justify;text-align-last:justify">沂蒙精神与井冈山精神、延安精神、西柏坡精神一样，是我们党</div>
<div class="a nw" style="left:176px;top:705px;width:553px;font-family:'Liberation Serif',serif;font-size:16px;color:#3a3a3a;line-height:20px;text-align:justify;text-align-last:justify">和国家宝贵的精神财富。习近平提出，做好老师要“四有”：有理想</div>
<div class="a nw" style="left:176px;top:746px;width:553px;font-family:'Liberation Serif',serif;font-size:16px;color:#3a3a3a;line-height:20px;text-align:justify;text-align-last:justify">信念、有道德情操、有扎实学识和有仁爱之心。沂蒙精神内涵丰富，</div>
<div class="a nw" style="left:176px;top:788px;width:459px;font-family:'Liberation Serif',serif;font-size:16px;color:#3a3a3a;line-height:20px;text-align:justify;text-align-last:justify">可以激励我们不忘初心，争做新时代的“四有”好教师。</div>
<div class="a nw" style="left:213px;top:829px;width:516px;font-family:'Liberation Serif',serif;font-size:16px;color:#3a3a3a;line-height:20px;text-align:justify;text-align-last:justify">沂蒙精神是一种要不断结合新的时代条件发扬光大的宝贵精神</div>
<div class="a nw" style="left:176px;top:871px;width:553px;font-family:'Liberation Serif',serif;font-size:16px;color:#3a3a3a;line-height:20px;text-align:justify;text-align-last:justify">财富。作为高校教师，我们领悟沂蒙精神，弘扬沂蒙精神，就可以更</div>
<div class="a nw" style="left:176px;top:913px;width:553px;font-family:'Liberation Serif',serif;font-size:16px;color:#3a3a3a;line-height:20px;text-align:justify;text-align-last:justify">好地坚定理想信念，培养崇高的道德情操，勤奋学习，苦练本领，拥</div>
<div class="a nw" style="left:176px;top:954px;width:553px;font-family:'Liberation Serif',serif;font-size:16px;color:#3a3a3a;line-height:20px;text-align:justify;text-align-last:justify">有扎实学识，用仁爱之心对待学生，争做新时代的“四有”好教师。</div>

<!-- wps scrollbar -->
<div class="a" style="left:1082px;top:232px;width:14px;height:818px;background:#d3d3d3"></div>
<div class="a" style="left:1082px;top:232px;width:14px;height:18px;background:#e0e0e0"></div>
<svg class="a" style="left:1084px;top:237px" width="10" height="10"><path d="M1.5 0H8.5L5 3.5Z" fill="#8a8a8a"/><path d="M0.5 5V8H3M4 8H6M7 8H9.5V5" fill="none" stroke="#8a8a8a" stroke-width="1.2"/></svg>
<svg class="a" style="left:1085px;top:256px" width="8" height="5"><path d="M0 4.5L4 0.5L8 4.5Z" fill="#8a8a8a"/></svg>
<div class="a" style="left:1096px;top:77px;width:10px;height:973px;background:linear-gradient(90deg,rgba(0,0,0,0.22),rgba(0,0,0,0.08) 40%,rgba(0,0,0,0))"></div>
<div class="a" style="left:1082px;top:332px;width:14px;height:614px;background:#ebebeb;border:1px solid #a9a9a9;border-radius:7px"></div>

<div class="a" style="left:203px;top:340px;width:554px;height:311px;overflow:hidden;background:#1a0606">
<svg width="554" height="311" viewBox="0 0 554 311" style="position:absolute;left:0;top:0">
 <defs>
  <linearGradient id="vfloor" x1="0" y1="0" x2="0" y2="1">
   <stop offset="0" stop-color="#2e0a08"/><stop offset="0.25" stop-color="#3a0c0a"/><stop offset="0.34" stop-color="#6a1010"/><stop offset="0.45" stop-color="#8e1616"/><stop offset="0.62" stop-color="#981c1c"/><stop offset="0.78" stop-color="#7a1414"/><stop offset="0.9" stop-color="#4a0a0a"/><stop offset="1" stop-color="#280505"/>
  </linearGradient>
  <linearGradient id="vbeige" x1="0" y1="0" x2="1" y2="0">
   <stop offset="0" stop-color="#c8c1a1"/><stop offset="0.5" stop-color="#cdc5a6"/><stop offset="1" stop-color="#cbc4a4"/>
  </linearGradient>
  <linearGradient id="vband" x1="0" y1="0" x2="0" y2="1">
   <stop offset="0" stop-color="#2a1a0e"/><stop offset="0.2" stop-color="#8a6632"/><stop offset="0.45" stop-color="#4a3018"/><stop offset="0.7" stop-color="#9a7840"/><stop offset="1" stop-color="#3a2410"/>
  </linearGradient>
  <linearGradient id="vgold" x1="0" y1="0" x2="0" y2="1">
   <stop offset="0" stop-color="#f6d35a"/><stop offset="0.5" stop-color="#e88a22"/><stop offset="1" stop-color="#c0401a"/>
  </linearGradient>
  <linearGradient id="vdress" x1="0" y1="0" x2="1" y2="0">
   <stop offset="0" stop-color="#3f9572"/><stop offset="0.5" stop-color="#5cb892"/><stop offset="1" stop-color="#43997a"/>
  </linearGradient>
 </defs>
 <rect x="0" y="160" width="554" height="151" fill="url(#vfloor)"/>
 <ellipse cx="300" cy="262" rx="330" ry="52" fill="#a21e1e" opacity="0.35"/>
 <circle cx="131.8" cy="188.1" r="1.3" fill="#f7d9a0" opacity="0.68"/><circle cx="260.0" cy="188.4" r="1.1" fill="#fff0d0" opacity="0.74"/><circle cx="220.0" cy="199.9" r="1.1" fill="#fff0d0" opacity="0.43"/><circle cx="410.7" cy="192.8" r="0.9" fill="#f7d9a0" opacity="0.77"/><circle cx="166.9" cy="169.1" r="2.0" fill="#fff0d0" opacity="0.61"/><circle cx="218.8" cy="197.6" r="1.4" fill="#e8b070" opacity="0.86"/><circle cx="54.0" cy="173.0" r="1.1" fill="#fff0d0" opacity="0.88"/><circle cx="431.6" cy="199.6" r="1.4" fill="#e8b070" opacity="0.81"/><circle cx="295.9" cy="183.1" r="1.1" fill="#f7d9a0" opacity="0.54"/><circle cx="474.4" cy="204.7" r="1.7" fill="#e8b070" opacity="0.44"/><circle cx="534.4" cy="201.5" r="1.6" fill="#ffe8b8" opacity="0.74"/><circle cx="148.0" cy="172.6" r="1.5" fill="#fff0d0" opacity="0.70"/><circle cx="49.0" cy="197.6" r="1.4" fill="#e8b070" opacity="0.43"/><circle cx="236.6" cy="183.4" r="1.0" fill="#f7d9a0" opacity="0.68"/><circle cx="209.3" cy="189.7" r="1.6" fill="#e8b070" opacity="0.86"/><circle cx="280.0" cy="204.9" r="1.2" fill="#f7d9a0" opacity="0.39"/><circle cx="525.7" cy="203.9" r="1.2" fill="#f7d9a0" opacity="0.49"/><circle cx="542.9" cy="180.6" r="1.3" fill="#fff0d0" opacity="0.43"/><circle cx="208.7" cy="200.2" r="1.3" fill="#f7d9a0" opacity="0.83"/><circle cx="280.9" cy="184.0" r="1.8" fill="#e8b070" opacity="0.48"/><circle cx="242.3" cy="177.6" r="1.2" fill="#fff0d0" opacity="0.54"/><circle cx="547.1" cy="179.7" r="1.3" fill="#ffe8b8" opacity="0.67"/><circle cx="33.3" cy="191.2" r="1.5" fill="#e8b070" opacity="0.72"/><circle cx="271.2" cy="189.8" r="2.1" fill="#e8b070" opacity="0.36"/><circle cx="139.1" cy="184.9" r="1.6" fill="#e8b070" opacity="0.53"/><circle cx="102.6" cy="196.0" r="2.0" fill="#fff0d0" opacity="0.50"/><circle cx="58.1" cy="198.1" r="2.2" fill="#ffe8b8" opacity="0.73"/><circle cx="171.7" cy="176.2" r="1.9" fill="#ffe8b8" opacity="0.48"/><circle cx="53.8" cy="190.2" r="2.1" fill="#ffe8b8" opacity="0.72"/><circle cx="242.9" cy="199.7" r="1.0" fill="#ffe8b8" opacity="0.54"/><circle cx="490.2" cy="184.7" r="1.1" fill="#ffe8b8" opacity="0.42"/><circle cx="174.6" cy="198.9" r="1.6" fill="#e8b070" opacity="0.83"/><circle cx="447.2" cy="191.8" r="1.9" fill="#ffe8b8" opacity="0.54"/><circle cx="233.4" cy="187.2" r="2.0" fill="#fff0d0" opacity="0.61"/><circle cx="160.9" cy="189.0" r="0.8" fill="#ffe8b8" opacity="0.58"/><circle cx="2.6" cy="202.9" r="2.0" fill="#fff0d0" opacity="0.89"/><circle cx="309.6" cy="204.5" r="1.8" fill="#fff0d0" opacity="0.37"/><circle cx="463.5" cy="192.5" r="1.5" fill="#e8b070" opacity="0.51"/><circle cx="492.9" cy="199.9" r="2.0" fill="#f7d9a0" opacity="0.88"/><circle cx="448.8" cy="169.7" r="2.1" fill="#ffe8b8" opacity="0.73"/><circle cx="496.7" cy="201.3" r="1.6" fill="#f7d9a0" opacity="0.36"/><circle cx="95.2" cy="179.1" r="1.7" fill="#fff0d0" opacity="0.64"/><circle cx="29.5" cy="201.8" r="1.0" fill="#fff0d0" opacity="0.42"/><circle cx="449.6" cy="170.3" r="1.1" fill="#f7d9a0" opacity="0.42"/><circle cx="94.9" cy="197.3" r="2.1" fill="#f7d9a0" opacity="0.79"/><circle cx="270.1" cy="189.1" r="1.4" fill="#ffe8b8" opacity="0.77"/><circle cx="148.8" cy="187.5" r="1.4" fill="#f7d9a0" opacity="0.61"/><circle cx="474.8" cy="196.7" r="0.9" fill="#fff0d0" opacity="0.38"/><circle cx="540.0" cy="199.6" r="0.9" fill="#e8b070" opacity="0.63"/><circle cx="87.0" cy="170.7" r="1.3" fill="#e8b070" opacity="0.56"/><circle cx="199.9" cy="175.1" r="1.3" fill="#f7d9a0" opacity="0.42"/><circle cx="44.3" cy="174.6" r="1.3" fill="#fff0d0" opacity="0.68"/><circle cx="352.7" cy="169.6" r="2.0" fill="#fff0d0" opacity="0.38"/><circle cx="421.1" cy="179.7" r="2.1" fill="#f7d9a0" opacity="0.58"/><circle cx="135.8" cy="187.8" r="1.8" fill="#fff0d0" opacity="0.39"/><circle cx="124.3" cy="172.8" r="0.8" fill="#e8b070" opacity="0.53"/><circle cx="67.3" cy="193.6" r="2.1" fill="#fff0d0" opacity="0.75"/><circle cx="312.4" cy="171.8" r="1.6" fill="#ffe8b8" opacity="0.35"/><circle cx="130.7" cy="182.4" r="1.5" fill="#fff0d0" opacity="0.66"/><circle cx="99.3" cy="168.9" r="2.0" fill="#f7d9a0" opacity="0.42"/><circle cx="527.6" cy="189.4" r="1.9" fill="#ffe8b8" opacity="0.37"/>
 <rect x="0" y="0" width="554" height="20" fill="#120806"/>
 <path d="M0 1Q277 15 554 0V8Q277 44 0 11Z" fill="#4a2a16"/>
 <path d="M0 6Q277 30 554 4V8Q277 44 0 11Z" fill="#8a7442"/>
 <path d="M0 3Q277 22 554 2" fill="none" stroke="#9a5a30" stroke-width="2.5" stroke-dasharray="3 2" opacity="0.8"/>
 <path d="M0 8.5Q277 37 554 6" fill="none" stroke="#d8c070" stroke-width="1.8" stroke-dasharray="5 3" opacity="0.7"/>
 <path d="M0 11Q277 41 554 8V148Q277 148 0 155Z" fill="url(#vbeige)"/>
 <path d="M0 155Q277 148 554 148V165Q277 165 0 173Z" fill="#5a3a1c"/>
 <path d="M0 158Q277 151 554 151" fill="none" stroke="#c8aa60" stroke-width="2" opacity="0.8"/>
 <path d="M0 165Q277 158 554 158" fill="none" stroke="#b09050" stroke-width="3" stroke-dasharray="4 2" opacity="0.8"/>
 <path d="M0 171Q277 163 554 163" fill="none" stroke="#7a5428" stroke-width="2" opacity="0.9"/>
 <text x="34" y="39" font-family="Liberation Sans" font-weight="bold" font-style="italic" font-size="17" fill="#fff" opacity="0.75" letter-spacing="-1">CCTV</text>
 <circle cx="89" cy="33" r="9" fill="#fff" opacity="0.25"/><text x="86" y="38" font-family="Liberation Sans" font-weight="bold" font-size="13" fill="#fff" opacity="0.8">1</text>
 <text x="52" y="52" font-size="9" fill="#fff" opacity="0.75" letter-spacing="12">综合</text>
 <rect x="79" y="38" width="44" height="44" rx="5" fill="#c8232a"/>
 <text x="102" y="57" font-size="15" fill="#fff">中</text><text x="102" y="78" font-size="15" fill="#fff">国</text>
 <path d="M84 60Q95 45 96 55Q90 70 85 76M88 52L100 62" fill="none" stroke="#fff" stroke-width="3"/>
 <linearGradient id="vg1" gradientUnits="userSpaceOnUse" x1="0" y1="95" x2="0" y2="133"><stop offset="0" stop-color="#f7d24a"/><stop offset="0.55" stop-color="#ee8a26"/><stop offset="1" stop-color="#c8321a"/></linearGradient><text x="33" y="130" font-size="37" fill="url(#vg1)" stroke="#a02a10" stroke-width="2" paint-order="stroke" font-weight="900" letter-spacing="3">時代楷模</text>
 <text x="431" y="41" font-family="Liberation Sans" font-weight="bold" font-size="17" fill="#fff" opacity="0.6" letter-spacing="-1">CNTV</text>
 <text x="475" y="42" font-size="15" fill="#fff" opacity="0.45" letter-spacing="3">高清</text>
 
 <path d="M463 162H514L508 245H472Z" fill="#c0b0b8" opacity="0.28"/>
 <path d="M463 162H514" stroke="#ddd" stroke-width="1.5" opacity="0.5"/>
 <text x="477" y="187" font-size="7" fill="#eee" opacity="0.6">时代楷模</text>
 <!-- woman -->
 <path d="M345 98Q343 84 356 83Q372 82 375 96Q376 106 372 110L356 120Q347 116 345 98Z" fill="#2e1a12"/>
 <path d="M355 99Q356 92 364 92Q374 93 375 103Q375 116 366 121Q357 121 355 112Z" fill="#dcae94"/>
 <path d="M336 137Q338 126 352 123L360 122L366 130L372 122L384 126Q390 130 390 140L392 160L384 162L382 172Q386 205 387 240Q372 246 356 245Q344 244 338 240Q340 205 342 172L337 160Z" fill="#58b890"/>
 <path d="M338 140Q334 150 337 162L350 164L352 148Z" fill="#4aa37f"/>
 <path d="M337 160Q338 170 350 171L372 168L372 158L352 162Z" fill="#e0b098"/>
 <path d="M350 142L408 134L396 156L350 162Z" fill="#4a0c0c"/>
 <path d="M356 152Q372 140 392 146L388 154L358 159Z" fill="#c8401a" opacity="0.55"/>
 <path d="M370 117L390 130" stroke="#1a1a1a" stroke-width="4" stroke-linecap="round"/>
 <path d="M380 124Q386 128 384 134L378 132Z" fill="#dcae94"/>
 <circle cx="361" cy="178" r="1.2" fill="#123"/><circle cx="374" cy="178" r="1.2" fill="#123"/><circle cx="361" cy="196" r="1.2" fill="#123"/><circle cx="374" cy="195" r="1.2" fill="#123"/>
 <path d="M344 242L346 288L356 289L357 244ZM358 244L360 286L371 288L371 242Z" fill="#dfb49c"/>
 <path d="M343 286Q345 293 350 294L357 293L356 287ZM359 285L362 292L378 297L378 292L369 286Z" fill="#121212"/>
 <!-- bottom right logo -->
 <rect x="441" y="214" width="26" height="27" rx="2" fill="#f08a3a"/>
 <text x="452" y="232" font-size="10" fill="#fff" opacity="0.8">国</text>
 <linearGradient id="vg2" gradientUnits="userSpaceOnUse" x1="0" y1="248" x2="0" y2="272"><stop offset="0" stop-color="#ffe070"/><stop offset="0.5" stop-color="#f5a030"/><stop offset="1" stop-color="#d0501a"/></linearGradient><text x="411" y="270" font-size="25" font-weight="900" fill="url(#vg2)" stroke="#7a200a" stroke-width="1.5" paint-order="stroke">时代 楷模</text>
 <text x="438" y="285" font-size="12" fill="#b89040" opacity="0.85" letter-spacing="1">发布厅</text>
 <!-- bottom-left logo -->
 <path d="M44 232H82L80 245H42Z" fill="#e9b23a"/>
 <circle cx="62" cy="238" r="8" fill="none" stroke="#f3c84a" stroke-width="2"/>
 <text x="37" y="254" font-size="6" fill="#e9b23a">普惠制药 营养世界</text>
 <path d="M36 258H104" stroke="#e9b23a" stroke-width="0.8" opacity="0.7"/>
 <text x="64" y="276" font-size="19" fill="#e6e2df" opacity="0.92" stroke="#555" stroke-width="0.3">丹药济民情苇地</text>
 <!-- controls -->
 <rect x="11" y="291" width="1.6" height="6" fill="#fff"/><rect x="14.5" y="291" width="1.6" height="6" fill="#fff"/>
 <text x="22" y="297" font-family="Liberation Sans" font-size="5" fill="#ddd">16:02 / 19:01</text>
 <path d="M518 292H521L524 289V299L521 296H518Z" fill="#fff"/><path d="M526 291Q529 294 526 297" stroke="#fff" fill="none" stroke-width="0.8"/>
 <path d="M537 291V293M537 291H539M545 291H547V293M547 297V299H545M539 299H537V297" stroke="#fff" fill="none" stroke-width="1"/>
 <rect x="10" y="304" width="533" height="1.5" fill="#666" opacity="0.8"/>
 <rect x="10" y="304" width="452" height="1.5" fill="#f2f2f2"/>
</svg>
<div class="a" style="left:287px;top:42px;font-size:10px;line-height:13.5px;color:#2e2216">東</div><div class="a" style="left:311px;top:42px;font-size:10px;line-height:13.5px;color:#2e2216">丹<br>药<br>济<br>民<br>情<br>苇<br>地</div><div class="a" style="left:336px;top:42px;font-size:10px;line-height:13.5px;color:#2e2216">揽<br>蕙<br>蒙<br>山<br>风<br>舞</div><div class="a" style="left:360px;top:42px;font-size:10px;line-height:13.5px;color:#2e2216">涤<br>瑕<br>沂</div><div class="a" style="left:385px;top:42px;font-size:10px;line-height:13.5px;color:#2e2216">临<br>沂<br>坚<br>子<br>越<br>前</div><div class="a" style="left:410px;top:42px;font-size:10px;line-height:13.5px;color:#2e2216">泰<br>岳<br>凌<br>烟<br>续<br>彩<br>篇</div><div class="a" style="left:442px;top:37px;font-size:10px;line-height:13.5px;color:#2e2216">题<br>时<br>代<br>楷<br>模<br>赵<br>志<br>全</div>
</div>




<!-- TASKBAR -->
<div id="task" class="a"></div>
<svg class="a" style="left:10px;top:1057px" width="17" height="17"><path d="M0 2.3L7 1.3V8H0ZM8 1.2L17 0V8H8ZM0 9H7V15.7L0 14.7ZM8 9H17V17L8 15.8Z" fill="#fff"/></svg>
<div class="a" style="left:43px;top:1078px;width:14px;height:2px;background:#76b9ed"></div>
<div class="a" style="left:59px;top:1078px;width:12px;height:2px;background:#5a8fb8"></div>
<svg class="a" style="left:48px;top:1056px" width="18" height="17"><path d="M0 1H6L8 3H17V15H0Z" fill="#e8b84a"/><path d="M0 5H17V15H0Z" fill="#fbd872"/><rect x="1.5" y="0.5" width="4" height="1.5" fill="#3aa0e0"/><path d="M5 14V10H12V14M5 10L8.5 7L12 10" fill="none" stroke="#2a8fd8" stroke-width="2.2"/></svg>
<div class="a" style="left:76px;top:1050px;width:36px;height:30px;background:#525252"></div>
<div class="a" style="left:76px;top:1078px;width:36px;height:2px;background:#76b9ed"></div>
<svg class="a" style="left:85px;top:1056px" width="17" height="18"><path d="M8.5 0L16.5 4.5V13.5L8.5 18L0.5 13.5V4.5Z" fill="#2a6ee8"/><path d="M3.5 6.5L6 12L8.5 7.5L11 12L13.5 6.5" fill="none" stroke="#fff" stroke-width="1.6" stroke-linejoin="round"/></svg>
<div class="a" style="left:117px;top:1078px;width:28px;height:2px;background:#76b9ed"></div>
<svg class="a" style="left:123px;top:1057px" width="16" height="16" viewBox="0 0 16 16">
 <path d="M8 8L14.93 4A8 8 0 0 0 1.07 4Z" fill="#e53935"/>
 <path d="M8 8L1.07 4A8 8 0 0 0 8 16Z" fill="#43a047"/>
 <path d="M8 8L8 16A8 8 0 0 0 14.93 4Z" fill="#fdd835"/>
 <circle cx="8" cy="8" r="3.6" fill="#fff"/><circle cx="8" cy="8" r="2.8" fill="#4285f4"/>
</svg>
<div class="a nw" style="left:1564px;top:1055px;width:16px;height:16px;border:1px solid #222;background:#fff;color:#000;font-size:12.5px;line-height:14px;text-align:center;font-weight:bold">拼</div>
<svg class="a" style="left:1616px;top:1057px" width="18" height="16"><rect x="1" y="3" width="11" height="8" fill="none" stroke="#fff" stroke-width="1.1"/><path d="M6.5 11V14M3 14.5H10M4 1H16V9" fill="none" stroke="#fff" stroke-width="1.1"/></svg>
<div class="a" style="left:1665px;top:1056px;width:16px;height:17px;border-radius:3px;background:#3a8ee6"></div>
<svg class="a" style="left:1668px;top:1059px" width="10" height="11"><path d="M5 0L10 2V6Q10 9 5 11Q0 9 0 6V2Z" fill="#cfe4fb"/></svg>
<svg class="a" style="left:1689px;top:1055px" width="17" height="19"><path d="M8.5 0.8L16 3.5V9Q16 15 8.5 18.2Q1 15 1 9V3.5Z" fill="#1e74e0" stroke="#fff" stroke-width="1.2"/><path d="M4.5 8L8.5 12L12.5 8" fill="none" stroke="#fff" stroke-width="1.6"/></svg>
<svg class="a" style="left:1736px;top:1056px" width="18" height="17"><rect x="0" y="0" width="18" height="17" rx="4" fill="#f39a1e"/><path d="M4 8A5 5 0 0 1 13 5M14 9A5 5 0 0 1 5 12" fill="none" stroke="#fff" stroke-width="1.8"/></svg>
<div class="a nw" style="left:1812px;top:1057px;font-size:13px;color:#fff;line-height:16px">16:33:12</div>
<svg class="a" style="left:1878px;top:1056px" width="18" height="17"><path d="M1 1H17V12H8L4 16V12H1Z" fill="none" stroke="#fff" stroke-width="1.2"/></svg>
<div class="a" style="left:1914px;top:1050px;width:1px;height:30px;background:#6a6a6a"></div>

</body></html>
